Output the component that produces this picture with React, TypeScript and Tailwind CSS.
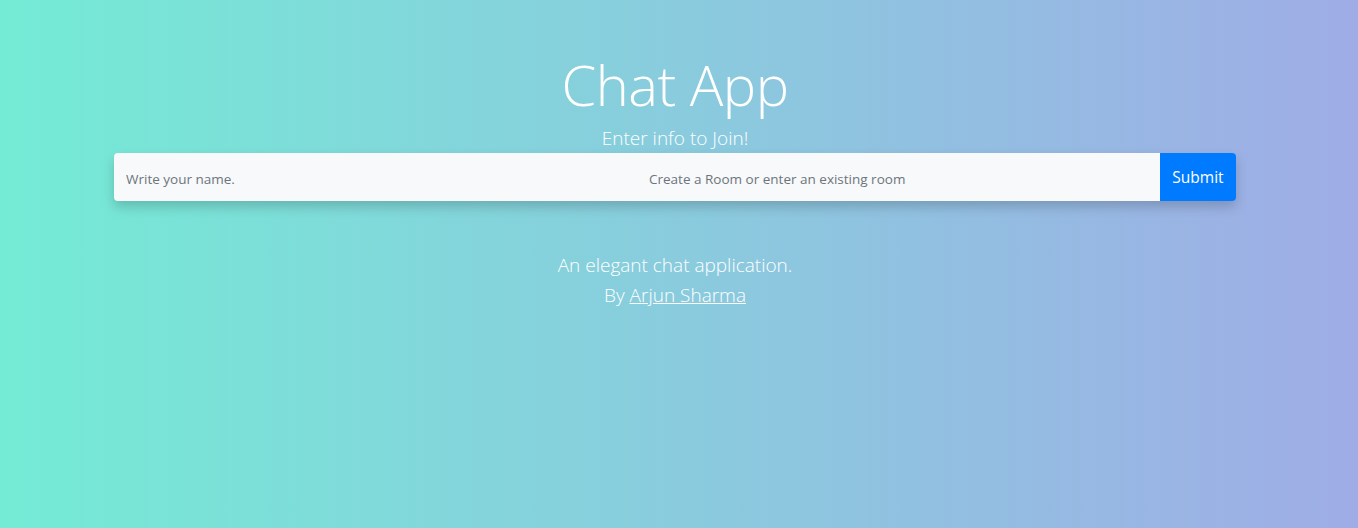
import React from 'react';

export default function App() {
  return (
    <div
      className="min-h-[528px] w-full bg-[linear-gradient(90deg,#74ebd5_0%,#9face6_100%)] text-white"
      style={{ fontFamily: '"Open Sans", "Noto Sans", sans-serif' }}
    >
      <div className="flex flex-col items-center pt-[48px] pr-[8px]">
        <h1 className="text-[56px] font-light leading-[72px] tracking-[-0.5px]">Chat App</h1>
        <p className="text-[19px] font-light leading-[26px] mt-[5px]">Enter info to Join!</p>

        {/* Join form */}
        <form className="mt-[2px] flex w-[1122px] h-[48px] rounded-[4px] shadow-[0_6px_12px_rgba(0,0,0,0.18)]">
          <input
            type="text"
            placeholder="Write your name."
            className="flex-1 min-w-0 h-full bg-[#f8f9fa] pl-[12px] text-[13.5px] text-[#495057] placeholder:text-[#6c757d] rounded-l-[4px] outline-none pt-[4px]"
          />
          <input
            type="text"
            placeholder="Create a Room or enter an existing room"
            className="flex-1 min-w-0 h-full bg-[#f8f9fa] pl-[12px] text-[13.5px] text-[#495057] placeholder:text-[#6c757d] outline-none pt-[4px]"
          />
          <button
            type="button"
            className="w-[76px] h-full bg-[#007bff] text-white text-[15.5px] rounded-r-[4px] pt-[2px]"
          >
            Submit
          </button>
        </form>

        <div className="mt-[49px] flex flex-col items-center text-[19px] font-light leading-[30px]">
          <p>An elegant chat application.</p>
          <p>
            By <a href="#" className="underline">Arjun Sharma</a>
          </p>
        </div>
      </div>
    </div>
  );
}
